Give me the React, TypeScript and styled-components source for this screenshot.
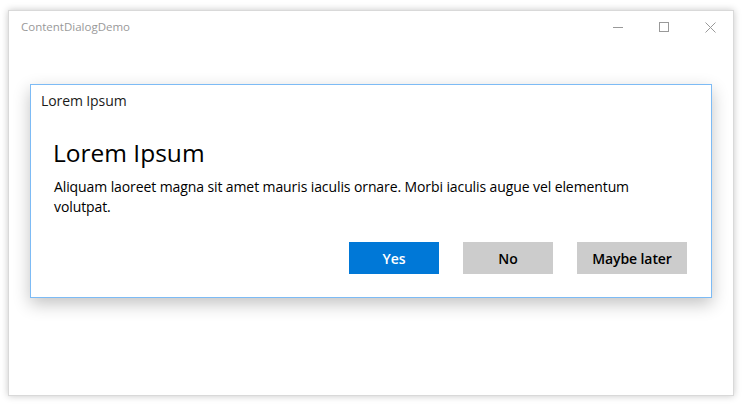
import React from "react";
import styled, { createGlobalStyle } from "styled-components";

const Global = createGlobalStyle`
  html, body { margin: 0; padding: 0; background: #ffffff; }
  body { font-family: "Open Sans", "Noto Sans", sans-serif; }
  * { box-sizing: border-box; }
`;

const Page = styled.div`
  width: 747px;
  height: 405px;
  padding: 10px 0 0 8px;
  background: #ffffff;
`;

const Window = styled.div`
  width: 726px;
  height: 386px;
  background: #ffffff;
  border: 1px solid #d9d9d9;
  box-shadow: 0 0 7px rgba(0, 0, 0, 0.22);
  display: flex;
  flex-direction: column;
`;

const TitleBar = styled.div`
  height: 31px;
  display: flex;
  align-items: center;
  padding-left: 12px;
`;

const AppTitle = styled.span`
  flex: 1;
  font-size: 11.5px;
  color: #999999;
`;

const Controls = styled.div`
  display: flex;
  height: 100%;
`;

const CtrlButton = styled.div`
  width: 46px;
  height: 100%;
  display: flex;
  align-items: center;
  justify-content: center;
  padding-top: 1px;
`;

const Dialog = styled.div`
  margin: 42px 21px 0;
  height: 214px;
  border: 1px solid #7dbbf5;
  background: #ffffff;
  box-shadow: 0 6px 16px rgba(0, 0, 0, 0.24);
  display: flex;
  flex-direction: column;
`;

const DialogCaption = styled.div`
  height: 27px;
  padding: 6px 0 0 10px;
  font-size: 14px;
  color: #1a1a1a;
  line-height: 20px;
  letter-spacing: -0.1px;
`;

const DialogBody = styled.div`
  padding: 25px 24px 0 23px;
  display: flex;
  flex-direction: column;
`;

const Heading = styled.h1`
  margin: 0 0 0 -1px;
  font-size: 24.5px;
  font-weight: 400;
  line-height: 32px;
  color: #000000;
`;

const Message = styled.p`
  margin: 8px 0 0;
  max-width: 595px;
  font-size: 14px;
  line-height: 20px;
  color: #000000;
  letter-spacing: -0.1px;
`;

const Actions = styled.div`
  display: flex;
  justify-content: flex-end;
  gap: 24px;
  margin-top: 25px;
`;

const Button = styled.button<{ $primary?: boolean; $w: number }>`
  width: ${(p) => p.$w}px;
  height: 32px;
  border: none;
  padding: 0;
  font-family: "Open Sans", "Noto Sans", sans-serif;
  font-size: 14px;
  font-weight: 600;
  letter-spacing: -0.1px;
  background: ${(p) => (p.$primary ? "#0078d7" : "#cccccc")};
  color: ${(p) => (p.$primary ? "#ffffff" : "#000000")};
`;

const Icon = styled.svg`
  display: block;
`;

export default function App() {
  return (
    <>
      <Global />
      <Page>
        <Window>
          <TitleBar>
            <AppTitle>ContentDialogDemo</AppTitle>
            <Controls>
              <CtrlButton>
                <Icon width="10" height="10" viewBox="0 0 10 10">
                  <line x1="0" y1="5.5" x2="10" y2="5.5" stroke="#999" strokeWidth="1" />
                </Icon>
              </CtrlButton>
              <CtrlButton>
                <Icon width="10" height="10" viewBox="0 0 10 10">
                  <rect x="0.5" y="0.5" width="9" height="9" fill="none" stroke="#999" strokeWidth="1" />
                </Icon>
              </CtrlButton>
              <CtrlButton>
                <Icon width="11" height="11" viewBox="0 0 11 11">
                  <path d="M0.5 0.5 L10.5 10.5 M10.5 0.5 L0.5 10.5" stroke="#999" strokeWidth="1" fill="none" />
                </Icon>
              </CtrlButton>
            </Controls>
          </TitleBar>
          <Dialog>
            <DialogCaption>Lorem Ipsum</DialogCaption>
            <DialogBody>
              <Heading>Lorem Ipsum</Heading>
              <Message>
                Aliquam laoreet magna sit amet mauris iaculis ornare. Morbi iaculis augue vel elementum volutpat.
              </Message>
              <Actions>
                <Button $primary $w={90}>Yes</Button>
                <Button $w={90}>No</Button>
                <Button $w={110}>Maybe later</Button>
              </Actions>
            </DialogBody>
          </Dialog>
        </Window>
      </Page>
    </>
  );
}
